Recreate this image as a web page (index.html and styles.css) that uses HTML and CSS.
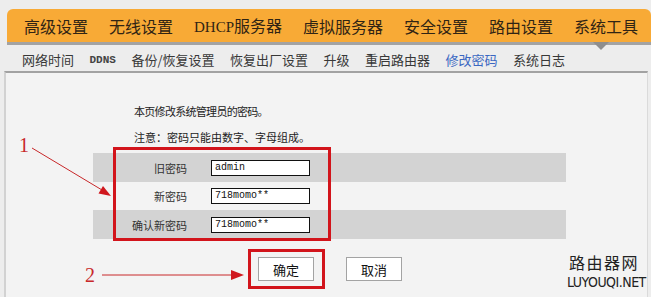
FILE: index.html
```html
<!DOCTYPE html>
<html lang="zh-CN">
<head>
<meta charset="utf-8">
<title>修改密码</title>
<link rel="stylesheet" href="styles.css">
</head>
<body>
<div class="page">
  <nav class="topnav">
    <span class="tn-item">高级设置</span>
    <span class="tn-item">无线设置</span>
    <span class="tn-item"><span class="latin">DHCP</span>服务器</span>
    <span class="tn-item">虚拟服务器</span>
    <span class="tn-item">安全设置</span>
    <span class="tn-item">路由设置</span>
    <span class="tn-item active">系统工具</span>
  </nav>
  <nav class="subnav">
    <span class="sn-item">网络时间</span>
    <span class="sn-item mono">DDNS</span>
    <span class="sn-item">备份/恢复设置</span>
    <span class="sn-item">恢复出厂设置</span>
    <span class="sn-item">升级</span>
    <span class="sn-item">重启路由器</span>
    <span class="sn-item current">修改密码</span>
    <span class="sn-item">系统日志</span>
  </nav>
  <main class="panel">
    <p class="intro intro-1">本页修改系统管理员的密码。</p>
    <p class="intro">注意：密码只能由数字、字母组成。</p>
    <div class="form">
      <div class="row shaded"><label class="lbl">旧密码</label><span class="field">admin</span></div>
      <div class="row tall-less"><label class="lbl">新密码</label><span class="field">718momo**</span></div>
      <div class="row shaded"><label class="lbl">确认新密码</label><span class="field">718momo**</span></div>
    </div>
    <div class="buttons">
      <button class="btn">确定</button>
      <button class="btn">取消</button>
    </div>
  </main>

  <div class="mark mark-1"></div>
  <div class="mark mark-2"></div>
  <div class="num num-1">1</div>
  <div class="num num-2">2</div>
  <svg class="arrows" width="651" height="297" viewBox="0 0 651 297">
    <line x1="32" y1="148" x2="102" y2="190" stroke="#c8282a" stroke-width="1"/>
    <polygon points="111,196 98.5,193.5 103,186" fill="#d0181e"/>
    <line x1="102" y1="275" x2="234" y2="275" stroke="#c8282a" stroke-width="1"/>
    <polygon points="244,275 231,270 231,280" fill="#d0181e"/>
  </svg>
  <div class="watermark">
    <div class="wm-cn">路由器网</div>
    <div class="wm-en">LUYOUQI.NET</div>
  </div>
</div>
</body>
</html>
```
FILE: styles.css
```css
html, body {
  margin: 0;
  padding: 0;
}
body {
  background: #ededed;
  font-family: "Noto Sans CJK SC", "Noto Sans", sans-serif;
  color: #333;
}
.page {
  position: relative;
  width: 651px;
  height: 297px;
  overflow: hidden;
  background: #ededed;
}

/* top orange menu */
.topnav {
  position: relative;
  margin: 9px 0 0 7px;
  height: 33px;
  background: #f8aa36;
  border-radius: 6px 6px 0 0;
  border-bottom: 3px solid #a3a3a3;
  display: flex;
  align-items: center;
  gap: 21px;
  padding-left: 17px;
  box-sizing: content-box;
}
.tn-item {
  font-size: 16px;
  line-height: 20px;
  color: #302414;
  white-space: nowrap;
}
.tn-item .latin {
  font-family: "Liberation Serif", serif;
  font-size: 15px;
}
.topnav::after {
  content: "";
  position: absolute;
  left: 586px;
  top: 33px;
  width: 0;
  height: 0;
  border-left: 8px solid transparent;
  border-right: 8px solid transparent;
  border-top: 8px solid #8e8e8e;
}

/* secondary menu */
.subnav {
  height: 23px;
  padding: 3px 0 0 22px;
  display: flex;
  align-items: center;
  gap: 15.5px;
}
.sn-item {
  font-size: 13px;
  line-height: 18px;
  color: #383838;
  white-space: nowrap;
}
.sn-item.mono {
  font-family: "Liberation Mono", monospace;
  font-size: 11px;
  font-weight: bold;
  color: #444;
}
.sn-item.current {
  color: #3a67c2;
}

/* content panel */
.panel {
  margin: 0 3px 0 4px;
  height: 240px;
  background: #f3f3f3;
  border-top: 2px solid #a2a2a2;
  border-left: 2px solid #d2d2d2;
  border-right: 1px solid #dadada;
  padding-top: 25px;
  box-sizing: border-box;
}
.intro {
  margin: 0;
  padding-left: 128px;
  font-size: 11px;
  line-height: 26px;
  color: #222;
}
.intro-1 {
  letter-spacing: -0.7px;
}
.form {
  margin: 3px 0 0 87px;
  width: 473px;
}
.row {
  height: 29px;
  display: flex;
  align-items: center;
}
.row.tall-less {
  height: 28px;
}
.row.shaded {
  background: #d3d3d3;
}
.lbl {
  width: 94px;
  text-align: right;
  font-size: 11px;
  color: #333;
}
.field {
  margin-left: 24px;
  width: 99px;
  height: 16px;
  box-sizing: border-box;
  border: 1px solid #111;
  background: #fff;
  font-family: "Liberation Mono", monospace;
  font-size: 10px;
  line-height: 14px;
  padding-left: 3px;
  color: #111;
}
.buttons {
  margin: 18px 0 0 252px;
  display: flex;
  gap: 32px;
}
.btn {
  width: 56px;
  height: 24px;
  background: #fff;
  border: 1px solid #a3a3a3;
  border-radius: 0;
  font-family: "Noto Sans CJK SC", sans-serif;
  font-size: 13px;
  color: #111;
  padding: 0;
}

/* annotations drawn over the screenshot */
.mark {
  position: absolute;
  border: 3px solid #d2141b;
  box-sizing: border-box;
}
.mark-1 {
  left: 113px;
  top: 147px;
  width: 218px;
  height: 94px;
}
.mark-2 {
  left: 248px;
  top: 249px;
  width: 77px;
  height: 40px;
}
.num {
  position: absolute;
  font-family: "Liberation Serif", serif;
  font-size: 20px;
  line-height: 20px;
  color: #c8282a;
}
.num-1 {
  left: 19px;
  top: 135px;
}
.num-2 {
  left: 85px;
  top: 265px;
}
.arrows {
  position: absolute;
  left: 0;
  top: 0;
  pointer-events: none;
}
.watermark {
  position: absolute;
  left: 567px;
  top: 251px;
  width: 74px;
  text-align: center;
  color: #222;
}
.wm-cn {
  font-size: 16px;
  line-height: 22px;
  letter-spacing: 1.5px;
}
.wm-en {
  margin-top: 1px;
  font-family: "Liberation Sans Narrow", "DejaVu Sans Condensed", sans-serif;
  font-size: 14px;
  line-height: 16px;
  letter-spacing: -0.5px;
}
```
